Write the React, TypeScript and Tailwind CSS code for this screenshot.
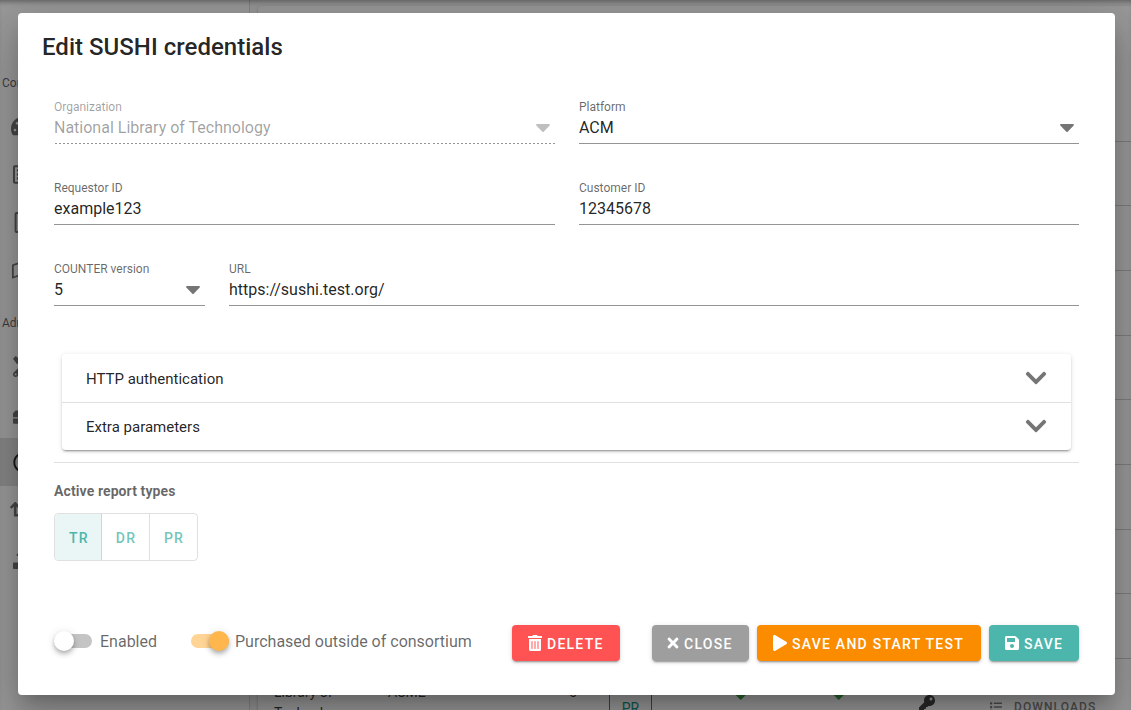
import type { ReactNode } from "react";
import {
  FaCaretDown,
  FaCheck,
  FaChevronDown,
  FaKey,
  FaList,
  FaPlay,
  FaRegCircle,
  FaRegFileAlt,
  FaRegListAlt,
  FaRegMap,
  FaRetweet,
  FaSave,
  FaTachometerAlt,
  FaTimes,
  FaToolbox,
  FaTools,
  FaTrashAlt,
  FaUpload,
} from "react-icons/fa";

function NavItem({ children, active = false }: { children: ReactNode; active?: boolean }) {
  return (
    <div className={`flex h-12 shrink-0 items-center pl-[13px] text-[21px] ${active ? "bg-[#dcdcdc] text-[#151515]" : "text-[#666]"}`}>
      {children}
    </div>
  );
}

function NavHeading({ children }: { children: ReactNode }) {
  return <div className="flex h-12 shrink-0 items-center pt-2.5 pl-0.5 text-xs text-black/70">{children}</div>;
}

function Sidebar() {
  return (
    <aside className="flex w-[250px] shrink-0 flex-col border-r border-black/15 bg-white pt-[54px]">
      <NavHeading>Content</NavHeading>
      <NavItem><FaTachometerAlt className="-ml-0.5 text-2xl" /></NavItem>
      <NavItem><FaRegListAlt /></NavItem>
      <NavItem><FaRegFileAlt className="-ml-px" /></NavItem>
      <NavItem><FaRegMap className="-ml-px" /></NavItem>
      <NavHeading>Administration</NavHeading>
      <NavItem><FaTools /></NavItem>
      <NavItem><FaToolbox /></NavItem>
      <NavItem active><FaRegCircle /></NavItem>
      <NavItem><FaRetweet className="-ml-[3px] text-[26px]" /></NavItem>
      <NavItem><FaUpload /></NavItem>
    </aside>
  );
}

const emptyRows = [0, 1, 2, 3, 4, 5, 6, 7];

function CredentialsTable() {
  return (
    <main className="flex grow flex-col bg-[#fafafa] pt-1.5 pl-2">
      <section className="flex grow flex-col rounded-tl bg-white shadow-[0_1px_3px_rgba(0,0,0,.3)]">
        <div className="h-[135.7px] shrink-0 border-b border-black/20" />
        {emptyRows.map((row) => (
          <div key={row} className="h-[64.67px] shrink-0 border-b border-black/20" />
        ))}
        <div className="flex h-[70px] shrink-0 overflow-hidden text-sm text-black/85">
          <div className="w-[114px] pt-[23px] pl-4 leading-[21px]">
            Library of
            <br />
            Technology
          </div>
          <div className="w-[180px] pt-[23px] pl-4 leading-[21px]">ASME</div>
          <div className="w-[57px] pt-[23px] pl-[17px] leading-[21px]">5</div>
          <div className="h-[60px] w-[43px] border-x border-[#00897b] pt-[39px] text-center text-[#00897b]">PR</div>
          <div className="w-[98px] pt-[25px] pl-[82px]"><FaCheck className="text-[18px] text-[#2e9e3a]" /></div>
          <div className="w-[98px] pt-[25px] pl-[82px]"><FaCheck className="text-[18px] text-[#2e9e3a]" /></div>
          <div className="w-[142px] pt-[36px] pl-[71px] text-[#333]"><FaKey className="text-base" /></div>
          <div className="flex items-start gap-3 pt-[38px] text-xs leading-5 font-medium tracking-[1.1px] text-[#777]">
            <FaList className="mt-1 text-xs" />
            DOWNLOADS
          </div>
        </div>
      </section>
    </main>
  );
}

interface FieldProps {
  label: string;
  value: string;
  select?: boolean;
  disabled?: boolean;
  className?: string;
}

function Field({ label, value, select = false, disabled = false, className = "grow basis-0" }: FieldProps) {
  return (
    <div className={`flex h-[81px] flex-col ${disabled ? "text-black/38" : "text-black/87"} ${className}`}>
      <div className={`text-xs leading-[14px] ${disabled ? "text-black/38" : "text-black/60"}`}>{label}</div>
      <div className="flex h-[29px] justify-between">
        <span className="pt-1 text-base leading-5">{value}</span>
        {select && (
          <FaCaretDown className={`mt-px text-2xl ${disabled ? "text-black/25" : "text-black/54"}`} />
        )}
      </div>
      <div
        className={`h-px shrink-0 ${disabled ? "bg-[repeating-linear-gradient(to_right,transparent_0px,transparent_1px,rgba(0,0,0,.42)_1px,rgba(0,0,0,.42)_3px,transparent_3px,transparent_4.016px)]" : "bg-black/42"}`}
      />
    </div>
  );
}

function Panel({ title, className = "" }: { title: string; className?: string }) {
  return (
    <div className={`flex items-center justify-between px-6 text-[15px] ${className}`}>
      <span className="pt-0.5">{title}</span>
      <FaChevronDown className="-mr-[1.4px] mb-px text-2xl text-black/54" />
    </div>
  );
}

function ActionButton({ icon, children, className }: { icon: ReactNode; children: ReactNode; className: string }) {
  return (
    <button
      className={`flex h-9 items-center gap-1 rounded pl-[15px] text-base font-medium text-white shadow-[0_3px_1px_-2px_rgba(0,0,0,.2),0_2px_2px_rgba(0,0,0,.14),0_1px_5px_rgba(0,0,0,.12)] ${className}`}
    >
      {icon}
      <span className="pt-px text-sm tracking-[1.25px]">{children}</span>
    </button>
  );
}

function Switch({ on = false, label, className = "" }: { on?: boolean; label: string; className?: string }) {
  return (
    <label className={`flex items-center ${className}`}>
      <span className={`flex h-3.5 w-[38px] items-center rounded-full ${on ? "justify-end bg-[#ffd494]" : "bg-linear-to-r from-transparent from-[7px] to-[#c4c4c4] to-[7px]"}`}>
        <span className={`size-5 rounded-full shadow-[0_2px_4px_-1px_rgba(0,0,0,.2),0_4px_5px_rgba(0,0,0,.14),0_1px_10px_rgba(0,0,0,.12)] ${on ? "bg-[#ffb74d]" : "bg-white"}`} />
      </span>
      <span className="pt-0.5 text-base text-black/60">{label}</span>
    </label>
  );
}

function EditDialog() {
  return (
    <div
      role="dialog"
      className="flex h-[682px] w-[1097px] flex-col rounded bg-white px-6 text-black/87 shadow-[0_11px_15px_-7px_rgba(0,0,0,.2),0_24px_38px_3px_rgba(0,0,0,.14),0_9px_46px_8px_rgba(0,0,0,.12)]"
    >
      <h1 className="h-[87px] shrink-0 pt-[18px] text-2xl leading-8 font-medium tracking-[0.02px]">Edit SUSHI credentials</h1>
      <div className="flex flex-col px-3">
        <div className="flex gap-6">
          <Field label="Organization" value="National Library of Technology" select disabled className="w-[501px]" />
          <Field label="Platform" value="ACM" select />
        </div>
        <div className="flex gap-6">
          <Field label="Requestor ID" value="example123" className="w-[501px]" />
          <Field label="Customer ID" value="12345678" />
        </div>
        <div className="flex gap-6">
          <Field label="COUNTER version" value="5" select className="w-[151px]" />
          <Field label="URL" value="https://sushi.test.org/" />
        </div>
        <div className="mx-2 mt-[11px] rounded shadow-[0_3px_1px_-2px_rgba(0,0,0,.2),0_2px_2px_rgba(0,0,0,.14),0_1px_5px_rgba(0,0,0,.12)]">
          <Panel title="HTTP authentication" className="h-12" />
          <Panel title="Extra parameters" className="h-12 border-t border-black/12" />
        </div>
        <hr className="mt-3 border-black/12" />
        <h2 className="mt-[18px] text-sm leading-5 font-bold tracking-[0.1px] text-black/60">Active report types</h2>
        <div className="mt-3 flex h-12 w-36 overflow-hidden rounded border border-black/12 text-sm font-medium tracking-[1.25px] text-[#4db6ac]">
          <button className="w-[47px] border-r border-black/12 bg-[#e9f6f5] pt-0.5 pl-[2px]">TR</button>
          <button className="w-12 border-r border-black/12 pt-0.5 pl-px text-[#4db6ac]/80">DR</button>
          <button className="w-[47px] pt-0.5 pl-px text-[#4db6ac]/80">PR</button>
        </div>
        <div className="mt-16 flex h-9 items-center">
          <Switch label="Enabled" className="w-[137px] gap-2 pb-1" />
          <Switch on label="Purchased outside of consortium" className="gap-1.5 pb-1" />
          <div className="ml-auto flex">
            <ActionButton icon={<FaTrashAlt className="h-4 w-auto" />} className="mr-8 w-[108px] bg-[#ff5252]">DELETE</ActionButton>
            <ActionButton icon={<FaTimes className="-mr-px -ml-0.5 h-4 w-auto" />} className="mr-2 w-[97px] bg-[#9e9e9e]">CLOSE</ActionButton>
            <ActionButton icon={<FaPlay className="h-4 w-auto" />} className="mr-2 w-56 bg-[#fb8c00]">SAVE AND START TEST</ActionButton>
            <ActionButton icon={<FaSave className="h-4 w-auto" />} className="w-[90px] bg-[#4db6ac]">SAVE</ActionButton>
          </div>
        </div>
      </div>
    </div>
  );
}

export default function App() {
  return (
    <div className="relative h-[710px] w-[1131px] overflow-hidden bg-white font-['Roboto',sans-serif]">
      <div className="flex h-full w-full">
        <Sidebar />
        <CredentialsTable />
      </div>
      <div className="absolute inset-0 flex items-start justify-center bg-[#212121]/46 pt-[13px] pl-[2px] shadow-[inset_0_5px_5px_-3px_rgba(0,0,0,.35)]">
        <EditDialog />
      </div>
    </div>
  );
}
